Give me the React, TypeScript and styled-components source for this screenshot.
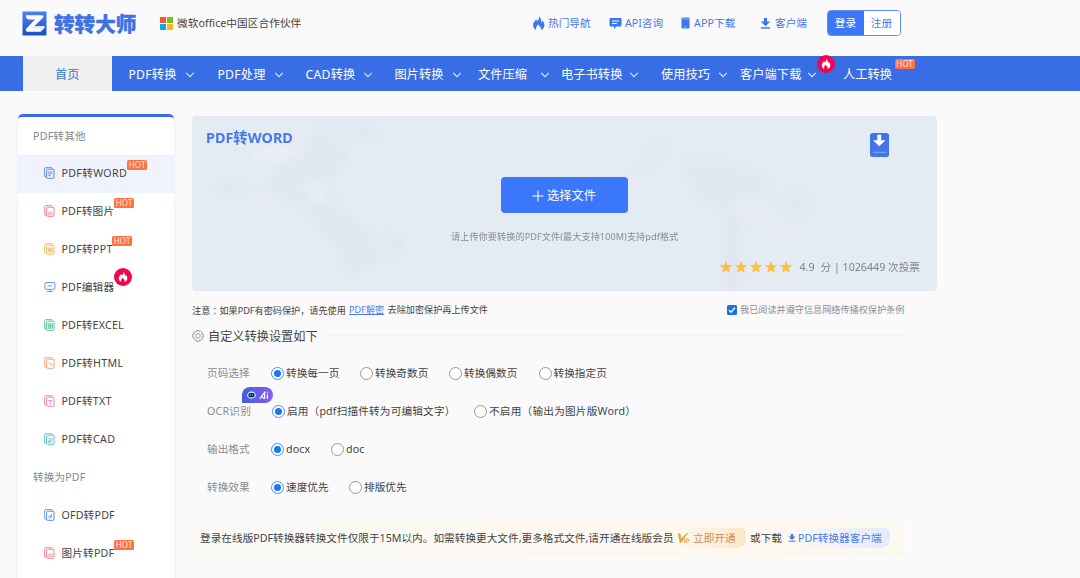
import React from "react";
import styled, { createGlobalStyle, css } from "styled-components";

const Global = createGlobalStyle`
  * { box-sizing: border-box; }
  html, body { margin: 0; padding: 0; }
  body {
    background: #fafafa;
    height: 578px;
    overflow: hidden;
    font-family: "Noto Sans", "Noto Sans CJK SC", sans-serif;
    font-size: 10.67px;
    color: #444;
  }
`;

const Text = styled.span<{ $w?: number; $ls?: number; $size?: number; $color?: string; $bold?: boolean }>`
  display: block;
  flex: none;
  white-space: nowrap;
  line-height: 16px;
  ${(p) => p.$w !== undefined && css`width: ${p.$w}px;`}
  ${(p) => p.$size && css`font-size: ${p.$size}px;`}
  ${(p) => p.$color && css`color: ${p.$color};`}
  ${(p) => p.$bold && css`font-weight: 700;`}
  letter-spacing: ${(p) => p.$ls ?? 0}px;
`;
const CenteredMark = styled.span`
  font-family: "Noto Sans CJK TC", sans-serif;
`;

/* ---------- header ---------- */
const Header = styled.header`
  display: flex;
  height: 56px;
  padding: 0 0 10px 22px;
  align-items: center;
`;
const Brand = styled.div`
  display: flex;
  align-items: center;
  width: 138px;
  gap: 7px;
`;
const BrandName = styled.span`
  font-size: 20.6px;
  line-height: 26px;
  padding-top: 1px;
  font-weight: 900;
  color: #3f72e4;
  white-space: nowrap;
  -webkit-text-stroke: 0.3px #3f72e4;
`;
const Partner = styled.div`
  display: flex;
  align-items: center;
  gap: 4px;
  width: 372px;
`;
const MsGrid = styled.div`
  display: grid;
  grid-template-columns: 6px 6px;
  grid-template-rows: 6px 6px;
  gap: 1px;
  i:nth-child(1) { background: #f1562b; }
  i:nth-child(2) { background: #7fba1c; }
  i:nth-child(3) { background: #12a5ee; }
  i:nth-child(4) { background: #fdb813; }
`;
const HeadLink = styled.a<{ $w: number; $gap: number }>`
  display: flex;
  align-items: center;
  gap: ${(p) => p.$gap}px;
  width: ${(p) => p.$w}px;
  color: #4a78e8;
`;
const AuthBox = styled.div`
  display: flex;
  width: 74px;
  height: 26px;
  border: 1px solid #5b8df5;
  border-radius: 4px;
  overflow: hidden;
  background: #fff;
`;
const AuthButton = styled.button<{ $primary?: boolean }>`
  width: 36px;
  padding: 0;
  border: 0;
  font: inherit;
  line-height: 24px;
  flex: none;
  background: ${(p) => (p.$primary ? "#3c77f8" : "#fff")};
  color: ${(p) => (p.$primary ? "#fff" : "#4a78e8")};
`;

/* ---------- navigation ---------- */
const Nav = styled.nav`
  display: flex;
  align-items: center;
  height: 35px;
  padding-left: 23px;
  background: #386de6;
`;
const NavHome = styled.a`
  width: 88.5px;
  height: 35px;
  margin-right: 17px;
  padding-top: 1px;
  background: #f0f0f0;
  color: #3a78c8;
  font-size: 12.2px;
  line-height: 35px;
  text-align: center;
`;
const NavItem = styled.a<{ $w: number }>`
  position: relative;
  flex: none;
  width: ${(p) => p.$w}px;
  padding-top: 2px;
  color: #fff;
`;
const NavInner = styled.div<{ $w: number }>`
  display: flex;
  align-items: center;
  justify-content: space-between;
  width: ${(p) => p.$w}px;
`;
const NavBadge = styled.span<{ $x: number; $y: number }>`
  position: absolute;
  left: ${(p) => p.$x}px;
  top: ${(p) => p.$y}px;
`;
const Hot = styled.span`
  display: block;
  width: 20.5px;
  height: 10px;
  border-radius: 1.5px;
  background: #ff7043;
  color: #ffe9dc;
  font-size: 8px;
  line-height: 10px;
  letter-spacing: 0.2px;
  text-align: center;
`;

/* ---------- page body ---------- */
const Page = styled.div`
  display: flex;
  align-items: flex-start;
  padding-left: 18px;
`;
const Side = styled.aside`
  width: 156px;
  height: 490px;
  margin: 23px 18px 0 0;
  border-top: 3px solid #386de6;
  border-radius: 5px 5px 0 0;
  background: #fff;
  box-shadow: 0 0 6px rgba(0, 0, 0, 0.05);
`;
const SideTitle = styled.div`
  display: flex;
  align-items: center;
  height: 38px;
  padding: 0 0 1px 15px;
  color: #888;
`;
const SideRow = styled.a<{ $active?: boolean }>`
  display: flex;
  align-items: center;
  height: 38px;
  padding: 0 0 2px 26px;
  gap: 5.4px;
  background: ${(p) => (p.$active ? "#f0f3fe" : "transparent")};
`;
const SideGroup = styled.div`
  margin-top: -0.5px;
`;
const IconCell = styled.span`
  display: flex;
  width: 12px;
`;
const SideLabel = styled.span`
  position: relative;
`;
const SideBadge = styled.span<{ $fire?: boolean }>`
  position: absolute;
  left: 100%;
  top: ${(p) => (p.$fire ? -11 : -4.5)}px;
`;

const Main = styled.main`
  width: 745px;
  padding-top: 25px;
`;
const Hero = styled.section`
  position: relative;
  display: flex;
  flex-direction: column;
  height: 175px;
  padding: 13px 17px 16px 14px;
  border-radius: 4px;
  background: #e5ebf3;
  overflow: hidden;
`;
const HeroTexture = styled.svg`
  position: absolute;
  inset: 0;
`;
const HeroTop = styled.div`
  position: relative;
  display: flex;
  justify-content: space-between;
  height: 48px;
  padding: 1px 31px 0 0;
`;
const UploadButton = styled.button`
  position: relative;
  display: flex;
  align-items: center;
  align-self: center;
  width: 127px;
  height: 36px;
  margin-left: 3px;
  padding: 1px 0 0 31px;
  gap: 3px;
  border: 0;
  border-radius: 4px;
  background: #3b77fa;
  color: #fff;
  font: inherit;
`;
const UploadHint = styled.div`
  position: relative;
  align-self: flex-start;
  margin: 16px 0 0 245px;
`;
const Rating = styled.div`
  position: relative;
  display: flex;
  align-items: center;
  margin: 14px 0 0 513px;
`;
const Stars = styled.div`
  display: flex;
  gap: 1px;
  width: 81px;
`;

const NoteRow = styled.div`
  display: flex;
  align-items: center;
  height: 37px;
  padding-top: 1px;
  color: #444;
`;
const NoteLink = styled(Text)`
  color: #4a7cf0;
  text-decoration: underline;
`;
const Check = styled.span`
  display: flex;
  width: 10px;
  height: 10px;
  margin: 0 3px 1px 0;
  border-radius: 1.5px;
  background: #1673e8;
`;
const SettingsHead = styled.div`
  display: flex;
  align-items: center;
  height: 16px;
  gap: 4px;
`;
const SettingsTitle = styled(Text)`
  padding-top: 1px;
  line-height: 15px;
`;
const Rule = styled.i`
  width: 580px;
  height: 1px;
  margin: 0 0 2px 6px;
  background: #f4f4f4;
`;
const OptionRows = styled.div`
  padding: 10px 0 0 15px;
`;
const OptionRow = styled.div`
  display: flex;
  align-items: center;
  height: 38px;
`;
const RowLabel = styled.div<{ $w: number }>`
  position: relative;
  flex: none;
  width: ${(p) => p.$w}px;
  color: #888c96;
`;
const AiBadge = styled.span`
  position: absolute;
  left: 35px;
  top: -16px;
  display: flex;
  align-items: center;
  width: 31px;
  height: 16px;
  padding-left: 5px;
  gap: 2.5px;
  border-radius: 8px 8px 8px 0;
  background: linear-gradient(90deg, #3f5fe0, #8a5cf5);
  color: #fff;
`;
const Option = styled.label<{ $w: number }>`
  display: flex;
  align-items: center;
  flex: none;
  gap: 2px;
  width: ${(p) => p.$w}px;
`;
const RadioDot = styled.span<{ $on?: boolean }>`
  display: grid;
  place-items: center;
  width: 13px;
  height: 13px;
  border-radius: 50%;
  border: 1px solid ${(p) => (p.$on ? "#4a90f5" : "#989898")};
  background: #fff;
  &::after {
    content: "";
    width: 7px;
    height: 7px;
    border-radius: 50%;
    background: ${(p) => (p.$on ? "#1c76ee" : "transparent")};
  }
`;
const Banner = styled.div`
  display: flex;
  align-items: center;
  width: 713px;
  height: 37px;
  margin-top: 14px;
  padding: 0 0 1px 8px;
  background: linear-gradient(90deg, #fbfaf8, #fcf9f2 35%, #fdf8f0 80%, #fbf8f3);
`;
const BannerOr = styled(Text)`
  margin-left: 3px;
`;
const VipPill = styled.span`
  display: flex;
  align-items: center;
  width: 69px;
  height: 20px;
  gap: 3px;
  border-radius: 0 5px 9px 0;
  background: linear-gradient(90deg, rgba(255, 229, 192, 0) 0, #fdf0e0 45%, #fee6c6);
  & + * { margin-left: 4px; }
`;
const ClientPill = styled.span`
  display: flex;
  align-items: center;
  width: 102px;
  height: 20px;
  gap: 2px;
  border-radius: 0 5px 9px 0;
  background: linear-gradient(90deg, rgba(224, 232, 250, 0) 0, #f0f2f9 50%, #e4eaf9);
`;

/* ---------- drawings ---------- */
const LogoMark = () => (
  <svg width="25" height="25" viewBox="0 0 25 25">
    <defs>
      <linearGradient id="lg" x1="0" y1="0" x2="0" y2="1">
        <stop offset="0" stopColor="#4b83f0" />
        <stop offset="1" stopColor="#1d4fc4" />
      </linearGradient>
    </defs>
    <rect x="0.5" y="0.5" width="24" height="24" rx="0.8" fill="url(#lg)" />
    <path d="M4 4.200h15.800c1.700 0 2.200 1.600 1 2.700L12.400 15h9.400L23 16.200l-4.400 4.600H5.600c-1.800 0-2.400-1.900-1.200-3.200L13 8.400H7.100C5.300 8.400 4 7 4 5.500z" fill="#fff" />
    <path d="M12.400 15l-3.200 2.600h9.600L21.800 15z" fill="#dce6fb" />
  </svg>
);
const FLAME = "M6.800.2C7.6 2.4 6.3 3.9 5.3 5.2 4.8 4.7 4.6 4 4.5 3.3 2.4 5 .8 7.3 1.1 9.8c.2 2 1.4 3.5 3.1 4.1C3.5 11.8 4.6 10.100 6.300 8.300c.3 1.2 1.100 1.700 1.900 2.500 1 1 1 2.200.5 3.200 2.100-.6 3.500-2.200 3.700-4.300.2-2.200-.8-3.900-2-5.300-.1.9-.4 1.500-1 2C9.300 4 8.800 1.500 6.800.2z";
const Flame = ({ size = 14, color = "#3c77ee" }: { size?: number; color?: string }) => (
  <svg width={size} height={size} viewBox="0 0 14 14">
    <path d={FLAME} fill={color} />
  </svg>
);
const FireBadge = () => (
  <svg width="18" height="18" viewBox="0 0 18 18" display="block">
    <circle cx="9" cy="9" r="9" fill="#f0064c" />
    <path d={FLAME} transform="translate(4 3.500) scale(.75)" fill="#fff" />
  </svg>
);
const ChatIcon = () => (
  <svg width="13" height="13" viewBox="0 0 13 13">
    <path d="M1.500 1h10a1 1 0 0 1 1 1v6.500a1 1 0 0 1-1 1H7.500L5 12V9.500H1.500a1 1 0 0 1-1-1V2a1 1 0 0 1 1-1z" fill="#3c77ee" />
    <path d="M3 4h7M3 6.500h5" stroke="#fff" strokeWidth="1" />
  </svg>
);
const PhoneIcon = () => (
  <svg width="9" height="12" viewBox="0 0 9 12">
    <rect x="0.500" y="0.500" width="8" height="11" rx="1" fill="#3c77ee" />
    <path d="M1 2h7" stroke="#a9c4fa" strokeWidth=".8" />
    <path d="M3.500 10h2" stroke="#dfe9fd" strokeWidth=".8" />
  </svg>
);
const DownIcon = ({ size = 11 }: { size?: number }) => (
  <svg width={size} height={size} viewBox="0 0 11 11">
    <path d="M3.900 0h3.200v3.500h3.200L5.500 8.200.7 3.500h3.200z" fill="#3c77ee" />
    <path d="M.8 9.900h9.400" stroke="#3c77ee" strokeWidth="1.400" />
  </svg>
);
const Chevron = () => (
  <svg width="10" height="6" viewBox="0 0 10 6">
    <path d="M1.200.8L5 4.700 8.800.8" fill="none" stroke="#dfe8fc" strokeWidth="1.100" />
  </svg>
);
const DocIcon = ({ color, mark }: { color: string; mark: string }) => (
  <svg width="11" height="12" viewBox="0 0 11 12" fill="none" stroke={color}>
    <path d="M2.600 10.200H1.800A1.200 1.200 0 0 1 .6 9V1.800A1.200 1.200 0 0 1 1.800.6h5.600a1.200 1.200 0 0 1 1.100 1" strokeWidth=".8" />
    <rect x="2.600" y="2.200" width="7.400" height="9.100" rx="1" strokeWidth=".9" />
    <path d={mark} strokeWidth=".8" />
  </svg>
);
const MonitorIcon = () => (
  <svg width="13" height="12" viewBox="0 0 13 12" fill="none" stroke="#4a7fe0" strokeWidth=".9">
    <rect x="1" y="1.200" width="10.800" height="7.300" rx="1" />
    <path d="M6.400 8.500v2.200M3.400 10.900h6M4.100 5.600l1.400-1.500 1.400 1.700 1.600-2.300" />
  </svg>
);
const HeroArrow = styled.svg`
  margin-top: 3px;
`;
const HeroDownload = () => (
  <HeroArrow width="19" height="24" viewBox="0 0 19 24">
    <rect width="19" height="24" rx="2.500" fill="#4275e8" />
    <path d="M7.300 1.800h3.900v5.500h4.300l-6.200 6-6.200-6h4.200z" fill="#fff" />
    <path d="M3 19.300h13" stroke="#86a9f3" strokeWidth="1" />
  </HeroArrow>
);
const Star = () => (
  <svg width="14" height="14" viewBox="0 0 14 14">
    <path d="M7 .8l1.600 4.100 4.700.3-3.600 2.900 1.200 4.600L7 10.200l-3.900 2.500 1.200-4.600L.7 5.200l4.700-.3z" fill="#fdbf40" />
  </svg>
);
const Gear = () => (
  <svg width="12" height="12" viewBox="0 0 12 12" fill="none" stroke="#8a8a8a" strokeWidth=".8">
    <path d="M4.900.5h2.200l.4 1.300 1.300-.6 1.500 1.500-.6 1.300 1.600.5v2.700l-1.500.5.5 1.300-1.500 1.500-1.300-.6-.4 1.500H4.900l-.4-1.500-1.300.6L1.700 9l.5-1.300-1.500-.5V4.500l1.600-.5-.6-1.300 1.500-1.500 1.300.6z" />
    <circle cx="6" cy="5.900" r="2.300" />
  </svg>
);
const Robot = () => (
  <svg width="9" height="8" viewBox="0 0 9 8">
    <rect x="0" y="2.500" width="9" height="3.500" rx="1.500" fill="#d6e2ff" />
    <rect x="1" y="0.600" width="7" height="7" rx="2.500" fill="#cfdcff" />
    <rect x="1.500" y="1.900" width="6" height="4.400" rx="1.500" fill="#16214f" />
    <path d="M3.400 3.100v1.800M5.600 3.100v1.800" stroke="#58d8ff" strokeWidth=".8" />
  </svg>
);
const AiMark = () => (
  <svg width="10" height="9" viewBox="0 0 10 9" fill="none" stroke="#fff" strokeWidth="1.200">
    <path d="M.8 7.800L5.600 1.400v6.400M2.800 5.800l2.800 2M8.400 3.200v4.600M8.400.8v1.300" />
  </svg>
);
const VipIcon = () => (
  <svg width="13" height="12" viewBox="0 0 13 12" fill="none">
    <path d="M.8 1.500h2.700l.6 5L9.800 1l1 .3L4 11H2.800z" fill="#e6a540" />
    <path d="M7.300 6.500v4.500M9.200 11.300V6.900h1.500a1.200 1.200 0 0 1 0 2.400H9.200" stroke="#e6a540" strokeWidth="1" />
  </svg>
);
const Texture = () => (
  <HeroTexture width="745" height="175" viewBox="0 0 745 175">
    <defs>
      <filter id="soft" x="-30%" y="-30%" width="160%" height="160%">
        <feGaussianBlur stdDeviation="4" />
      </filter>
    </defs>
    <g filter="url(#soft)" opacity=".6">
      <path d="M85 35l45-18 28 20-18 25 5 30 35 25 5 35-30 5-12-30-38-40-50-4 30-25z" fill="#dae2ee" opacity=".65" />
      <path d="M20 70l25-10 15 15-30 10zM190 115l22 4 2 18-20 8zM120 10l60-6 10 18-35 4z" fill="#dce4ef" opacity=".7" />
      <path d="M60 32l55-4-8 16-45 4zM50 80l40-2-8 8H52zM110 65l22 3 5 17-14 4z" fill="#edf2f8" opacity=".8" />
      <path d="M490 42l38 2 50 16-5 30-25-4 3 89h-22l2-80-30-15-12-25z" fill="#dbe2ef" opacity=".6" />
      <path d="M570 80l48-8 4 20-20 28-14-8 8-20zM435 60l30-40 15 5-20 35z" fill="#dce4f0" opacity=".5" />
      <path d="M545 82l28 4-10 25-18-10zM580 105l25 5-4 18-20-4z" fill="#ebf0f7" opacity=".7" />
    </g>
  </HeroTexture>
);

/* ---------- data ---------- */
type NavEntry = { t: string; w: number; inner: number; ls: number; fire?: boolean; hot?: boolean };
const navItems: NavEntry[] = [
  { t: "PDF转换", w: 89, inner: 66.5, ls: 0.25 },
  { t: "PDF处理", w: 88, inner: 66.5, ls: 0.25 },
  { t: "CAD转换", w: 89, inner: 67, ls: 0.25 },
  { t: "图片转换", w: 83.5, inner: 67.5, ls: 0.1 },
  { t: "文件压缩", w: 83, inner: 72, ls: 0.1 },
  { t: "电子书转换", w: 100, inner: 78, ls: 0.1 },
  { t: "使用技巧", w: 79, inner: 66.5, ls: 0.1 },
  { t: "客户端下载", w: 103, inner: 77, ls: 0.1, fire: true },
  { t: "人工转换", w: 80, inner: 50, ls: 0.1, hot: true },
];

type SideEntry = { t: string; w: number; color: string; mark: string; ls: number; badge?: "hot" | "fire"; active?: boolean };
const sideA: SideEntry[] = [
  { t: "PDF转WORD", w: 65.5, color: "#4a7fe0", mark: "M4.200 5h4.200M4.200 6.800h4.200M4.200 8.600h2.400", ls: 0.35, badge: "hot", active: true },
  { t: "PDF转图片", w: 52.5, color: "#f07080", mark: "M4 9.200h4.600M4.300 8.500l1.500-1.900 1 1 .8-.8 1 1.700", ls: 0.2, badge: "hot" },
  { t: "PDF转PPT", w: 50.5, color: "#f0b050", mark: "M4.300 5h4v4h-4zM5.500 6.200h1.600v1.600H5.500z", ls: 0.3, badge: "hot" },
  { t: "PDF编辑器", w: 52.5, color: "", mark: "", ls: 0.2, badge: "fire" },
  { t: "PDF转EXCEL", w: 64, color: "#45bd84", mark: "M4.300 4.800h4v4.400h-4zM6.300 4.800v4.400M4.300 7h4", ls: 0.2 },
  { t: "PDF转HTML", w: 64, color: "#f59a68", mark: "M4.300 6.500l1.200-1.300 1.500 1.500-1 1M6 6.800l1.500 1.600 1-1", ls: 0.3 },
  { t: "PDF转TXT", w: 52, color: "#f070b0", mark: "M4.300 5.600h4M6.300 5.600v3.700", ls: 0.25 },
  { t: "PDF转CAD", w: 55, color: "#40c0b8", mark: "M4.300 5.800h4M4.300 9l3.800-2.500M4.300 7.500v1.500h4", ls: 0.3 },
];
const sideB: SideEntry[] = [
  { t: "OFD转PDF", w: 54, color: "#4a7fe0", mark: "M5 9.200c2 0 2.500-2 2.500-4M4.300 7.500c1.500-1 3 0 3.800 1", ls: 0.2 },
  { t: "图片转PDF", w: 52.5, color: "#f07080", mark: "M4 9.200h4.600M4.300 8.500l1.500-1.900 1 1 .8-.8 1 1.700", ls: 0.2, badge: "hot" },
];

const SideList = ({ items }: { items: SideEntry[] }) => (
  <>
    {items.map((s) => (
      <SideRow key={s.t} $active={s.active}>
        <IconCell>{s.color ? <DocIcon color={s.color} mark={s.mark} /> : <MonitorIcon />}</IconCell>
        <SideLabel>
          <Text $w={s.w} $ls={s.ls}>{s.t}</Text>
          {s.badge && (
            <SideBadge $fire={s.badge === "fire"}>{s.badge === "fire" ? <FireBadge /> : <Hot>HOT</Hot>}</SideBadge>
          )}
        </SideLabel>
      </SideRow>
    ))}
  </>
);

type Choice = { t: string; w: number; on?: boolean; ls?: number };
const rows: { label: string; w: number; ai?: boolean; choices: Choice[] }[] = [
  {
    label: "页码选择",
    w: 64,
    choices: [
      { t: "转换每一页", w: 89, on: true },
      { t: "转换奇数页", w: 89 },
      { t: "转换偶数页", w: 89.5 },
      { t: "转换指定页", w: 90 },
    ],
  },
  {
    label: "OCR识别",
    w: 65,
    ai: true,
    choices: [
      { t: "启用（pdf扫描件转为可编辑文字）", w: 202, on: true, ls: 0.15 },
      { t: "不启用（输出为图片版Word）", w: 200, ls: 0.2 },
    ],
  },
  { label: "输出格式", w: 64, choices: [{ t: "docx", w: 60, on: true, ls: 0.1 }, { t: "doc", w: 60, ls: 0.1 }] },
  { label: "转换效果", w: 64, choices: [{ t: "速度优先", w: 78, on: true }, { t: "排版优先", w: 80 }] },
];

export default function App() {
  return (
    <>
      <Global />
      <Header>
        <Brand>
          <LogoMark />
          <BrandName>转转大师</BrandName>
        </Brand>
        <Partner>
          <MsGrid><i /><i /><i /><i /></MsGrid>
          <Text $ls={0.05}>微软office中国区合作伙伴</Text>
        </Partner>
        <HeadLink $w={77} $gap={2}><Flame /><Text>热门导航</Text></HeadLink>
        <HeadLink $w={72} $gap={3}><ChatIcon /><Text>API咨询</Text></HeadLink>
        <HeadLink $w={79} $gap={4}><PhoneIcon /><Text $ls={0.1}>APP下载</Text></HeadLink>
        <HeadLink $w={66.5} $gap={4}><DownIcon /><Text>客户端</Text></HeadLink>
        <AuthBox>
          <AuthButton $primary>登录</AuthButton>
          <AuthButton>注册</AuthButton>
        </AuthBox>
      </Header>

      <Nav>
        <NavHome>首页</NavHome>
        {navItems.map((n) => (
          <NavItem key={n.t} $w={n.w}>
            <NavInner $w={n.inner}>
              <Text $size={12.2} $ls={n.ls}>{n.t}</Text>
              {!n.hot && <Chevron />}
            </NavInner>
            {n.fire && <NavBadge $x={77} $y={-10}><FireBadge /></NavBadge>}
            {n.hot && <NavBadge $x={51.5} $y={-6}><Hot>HOT</Hot></NavBadge>}
          </NavItem>
        ))}
      </Nav>

      <Page>
        <Side>
          <SideTitle><Text $ls={0.2}>PDF转其他</Text></SideTitle>
          <SideGroup>
            <SideList items={sideA} />
            <SideTitle><Text $ls={0.1}>转换为PDF</Text></SideTitle>
            <SideList items={sideB} />
          </SideGroup>
        </Side>

        <Main>
          <Hero>
            <Texture />
            <HeroTop>
              <Text $size={14.4} $color="#4478ee" $bold>PDF转WORD</Text>
              <HeroDownload />
            </HeroTop>
            <UploadButton>
              <svg width="12" height="12" viewBox="0 0 12 12">
                <path d="M6 .5v11M.5 6h11" stroke="#fff" strokeWidth="1.100" />
              </svg>
              <Text $size={12.2} $ls={0.1}>选择文件</Text>
            </UploadButton>
            <UploadHint>
              <Text $size={9.15} $ls={0.08} $color="#888c94">请上传你要转换的PDF文件(最大支持100M)支持pdf格式</Text>
            </UploadHint>
            <Rating>
              <Stars><Star /><Star /><Star /><Star /><Star /></Stars>
              <Text $w={21} $color="#7f838b">4.9</Text>
              <Text $color="#7f838b">分 | 1026449 次投票</Text>
            </Rating>
          </Hero>

          <NoteRow>
            <Text $size={9.15} $w={157}>注意<CenteredMark>：</CenteredMark>如果PDF有密码保护，请先使用</Text>
            <NoteLink $size={9.15} $w={38.5}>PDF解密</NoteLink>
            <Text $size={9.15} $w={339.5}>去除加密保护再上传文件</Text>
            <Check>
              <svg width="10" height="10" viewBox="0 0 10 10">
                <path d="M2 5.200l2.100 2.100L8 2.600" fill="none" stroke="#fff" strokeWidth="1.400" />
              </svg>
            </Check>
            <Text $size={9.15} $color="#8a8e96">我已阅读并遵守信息网络传播权保护条例</Text>
          </NoteRow>

          <SettingsHead>
            <Gear />
            <SettingsTitle $size={12.2}>自定义转换设置如下</SettingsTitle>
            <Rule />
          </SettingsHead>

          <OptionRows>
            {rows.map((r) => (
              <OptionRow key={r.label}>
                <RowLabel $w={r.w}>
                  <Text $ls={r.ai ? 0.2 : 0}>{r.label}</Text>
                  {r.ai && <AiBadge><Robot /><AiMark /></AiBadge>}
                </RowLabel>
                {r.choices.map((c) => (
                  <Option key={c.t} $w={c.w}>
                    <RadioDot $on={c.on} />
                    <Text $ls={c.ls}>{c.t}</Text>
                  </Option>
                ))}
              </OptionRow>
            ))}
          </OptionRows>

          <Banner>
            <Text $w={477}>登录在线版PDF转换器转换文件仅限于15M以内。如需转换更大文件,更多格式文件,请开通在线版会员</Text>
            <VipPill><VipIcon /><Text $color="#cf8d50">立即开通</Text></VipPill>
            <BannerOr $w={38}>或下载</BannerOr>
            <ClientPill><DownIcon size={8} /><Text $color="#4a7cf0">PDF转换器客户端</Text></ClientPill>
          </Banner>
        </Main>
      </Page>
    </>
  );
}
